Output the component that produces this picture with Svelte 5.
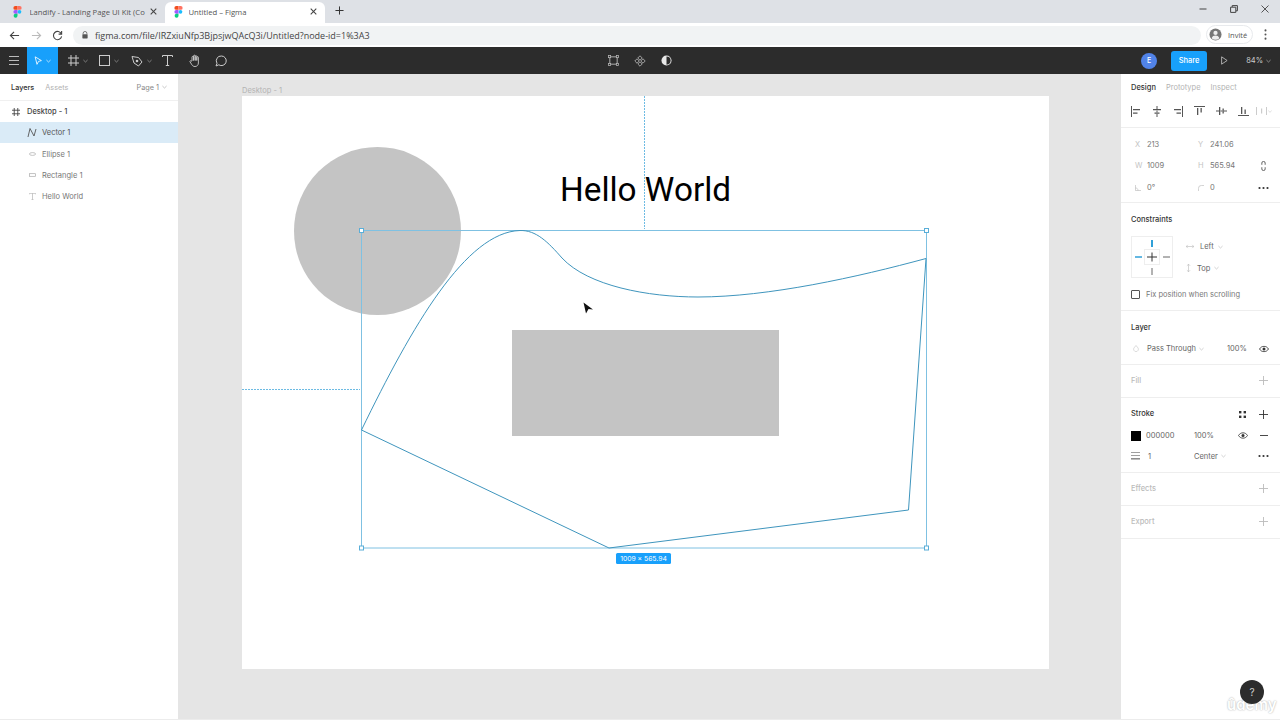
<script>
  const layers = [
    { name: 'Vector 1', icon: 'vector', selected: true },
    { name: 'Ellipse 1', icon: 'ellipse' },
    { name: 'Rectangle 1', icon: 'rect' },
    { name: 'Hello World', icon: 'text' }
  ];
</script>

{#snippet figmaLogo()}
  <svg class="favicon" viewBox="0 0 12 16" width="9" height="12">
    <path d="M3 0h3v5H3a2.5 2.5 0 0 1 0-5z" fill="#f24e1e"/>
    <path d="M6 0h3a2.5 2.5 0 0 1 0 5H6z" fill="#ff7262"/>
    <path d="M3 5.2h3v5H3a2.5 2.5 0 0 1 0-5z" fill="#a259ff"/>
    <circle cx="8.6" cy="7.7" r="2.5" fill="#1abcfe"/>
    <path d="M3 10.4h3V13a2.6 2.6 0 1 1-3-2.6z" fill="#0acf83"/>
  </svg>
{/snippet}

{#snippet chevron(color = '#999')}
  <svg class="chev" viewBox="0 0 6 4" width="5" height="4"><path d="M.5.8 3 3.2 5.5.8" fill="none" stroke={color} stroke-width=".8"/></svg>
{/snippet}

{#snippet plus(color = '#bbb')}
  <svg viewBox="0 0 10 10" width="9" height="9"><path d="M5 0v10M0 5h10" stroke={color} stroke-width="1" fill="none"/></svg>
{/snippet}

{#snippet dots()}
  <svg viewBox="0 0 11 3" width="11" height="3"><circle cx="1.5" cy="1.5" r="1.1" fill="#333"/><circle cx="5.5" cy="1.5" r="1.1" fill="#333"/><circle cx="9.5" cy="1.5" r="1.1" fill="#333"/></svg>
{/snippet}

{#snippet eye()}
  <svg viewBox="0 0 12 8" width="10" height="7"><path d="M.6 4C2 1.8 3.8.8 6 .8S10 1.8 11.4 4C10 6.2 8.2 7.2 6 7.2S2 6.2.6 4z" fill="none" stroke="#333" stroke-width="1"/><circle cx="6" cy="4" r="1.8" fill="#333"/></svg>
{/snippet}

<div class="app">
  <div class="tabs">
    <div class="tab inactive">
      {@render figmaLogo()}
      <span class="tab-title">Landify - Landing Page UI Kit (Co</span>
      <svg class="tab-x" viewBox="0 0 8 8" width="7" height="7"><path d="M.8.8l6.4 6.4M7.2.8.8 7.2" stroke="#444" stroke-width="1.2"/></svg>
    </div>
    <div class="tab active">
      {@render figmaLogo()}
      <span class="tab-title">Untitled – Figma</span>
      <svg class="tab-x" viewBox="0 0 8 8" width="7" height="7"><path d="M.8.8l6.4 6.4M7.2.8.8 7.2" stroke="#444" stroke-width="1.2"/></svg>
    </div>
    <svg class="newtab" viewBox="0 0 10 10" width="9" height="9"><path d="M5 .5v9M.5 5h9" stroke="#333" stroke-width="1.1"/></svg>
    <div class="winctl">
      <svg viewBox="0 0 8 8" width="8" height="8"><path d="M.5 4h7" stroke="#444"/></svg>
      <svg viewBox="0 0 8 8" width="8" height="8"><path d="M.6 2.2h5.2v5.2H.6zM2.2 2V.6h5.2v5.2H6" fill="none" stroke="#444"/></svg>
      <svg viewBox="0 0 8 8" width="8" height="8"><path d="M.5.5l7 7M7.5.5l-7 7" stroke="#444" stroke-width=".9"/></svg>
    </div>
  </div>

  <div class="address">
    <svg viewBox="0 0 12 12" width="11" height="11"><path d="M11 6H1.5M5.500 2 1.500 6l4 4" fill="none" stroke="#444" stroke-width="1.2"/></svg>
    <svg viewBox="0 0 12 12" width="11" height="11"><path d="M1 6h9.500M6.500 2l4 4-4 4" fill="none" stroke="#bbb" stroke-width="1.2"/></svg>
    <svg class="reload" viewBox="0 0 12 12" width="11" height="11"><path d="M10.200 4.200A4.500 4.500 0 1 0 10.500 7M10.500 1.200v3.300H7.200" fill="none" stroke="#444" stroke-width="1.2"/></svg>
    <div class="url">
      <svg viewBox="0 0 8 10" width="6" height="8"><path d="M1.500 4V2.800a2.500 2.500 0 0 1 5 0V4" fill="none" stroke="#555"/><rect x=".5" y="4" width="7" height="5.500" rx=".7" fill="#555"/></svg>
      <span>figma.com/file/IRZxiuNfp3BjpsjwQAcQ3i/Untitled?node-id=1%3A3</span>
    </div>
    <div class="guest">
      <svg viewBox="0 0 14 14" width="13" height="13"><circle cx="7" cy="7" r="6.500" fill="#777"/><circle cx="7" cy="5.300" r="2.300" fill="#eee"/><path d="M2.800 11c.8-2 2.300-2.800 4.200-2.800s3.400.8 4.200 2.800a6 6 0 0 1-8.400 0z" fill="#eee"/></svg>
      <span>Invité</span>
    </div>
    <svg class="kebab" viewBox="0 0 3 12" width="3" height="11"><circle cx="1.500" cy="1.500" r="1.100" fill="#555"/><circle cx="1.500" cy="6" r="1.100" fill="#555"/><circle cx="1.500" cy="10.500" r="1.100" fill="#555"/></svg>
  </div>

  <div class="toolbar">
    <div class="tools">
      <div class="tool menu">
        <svg viewBox="0 0 10 9" width="10" height="9"><path d="M0 .5h10M0 4.500h10M0 8.500h10" stroke="#bbb"/></svg>
      </div>
      <div class="tool move">
        <svg viewBox="0 0 10 12" width="9" height="10"><path d="M1 1l7.500 4.500-3.500 1-1.800 3.500z" fill="none" stroke="#fff"/></svg>
        <svg class="chev" viewBox="0 0 6 4" width="5" height="4"><path d="M.5.8 3 3.200 5.500.8" fill="none" stroke="#fff" stroke-width=".8"/></svg>
      </div>
      <div class="tool group">
        <svg viewBox="0 0 11 11" width="11" height="11"><path d="M3 0v11M8 0v11M0 3h11M0 8h11" stroke="#ccc" fill="none"/></svg>
        {@render chevron('#aaa')}
      </div>
      <div class="tool group">
        <svg viewBox="0 0 11 11" width="11" height="11"><rect x=".5" y=".5" width="10" height="10" fill="none" stroke="#ccc"/></svg>
        {@render chevron('#aaa')}
      </div>
      <div class="tool group">
        <svg viewBox="0 0 12 12" width="12" height="12"><path d="M1 1.500 7.500 2.500 11 7 7.500 11 3 8z" fill="none" stroke="#ccc"/><circle cx="6" cy="6" r="1.300" fill="#ccc"/></svg>
        {@render chevron('#aaa')}
      </div>
      <div class="tool group text-tool">
        <svg viewBox="0 0 11 11" width="11" height="11"><path d="M.5 2V.5h10V2M5.500.5v10M3.800 10.500h3.400" fill="none" stroke="#ccc"/></svg>
      </div>
      <div class="tool hand">
        <svg viewBox="0 0 12 13" width="12" height="13"><path d="M3 7V3.200a.8.8 0 0 1 1.600 0V6.500V2a.8.8 0 0 1 1.600 0v4.500V2.500a.8.8 0 0 1 1.600 0v4V3.500a.8.8 0 0 1 1.600 0V9c0 2-1.400 3.500-3.400 3.500-1.500 0-2.400-.6-3.100-1.700L1 7.800c-.4-.9.800-1.500 1.300-.7z" fill="none" stroke="#ccc" stroke-width=".9"/></svg>
      </div>
      <div class="tool comment">
        <svg viewBox="0 0 12 12" width="12" height="12"><path d="M6.500 1a4.800 4.800 0 1 1-2.700 8.800L1 11l1-2.700A4.800 4.800 0 0 1 6.500 1z" fill="none" stroke="#ccc"/></svg>
      </div>
    </div>
    <div class="center-tools">
      <svg viewBox="0 0 12 12" width="11" height="11"><path d="M2 2h8v8H2z" fill="none" stroke="#bbb"/><g fill="#2c2c2c" stroke="#bbb" stroke-width=".8"><rect x=".5" y=".5" width="2.400" height="2.400"/><rect x="9.100" y=".5" width="2.400" height="2.400"/><rect x=".5" y="9.100" width="2.400" height="2.400"/><rect x="9.100" y="9.100" width="2.400" height="2.400"/></g></svg>
      <svg viewBox="0 0 12 12" width="12" height="12"><g fill="none" stroke="#bbb" stroke-width=".8"><path d="M6 .8 8.200 3 6 5.200 3.800 3zM6 6.800 8.200 9 6 11.200 3.800 9zM3 3.800 5.200 6 3 8.200.8 6zM9 3.800 11.200 6 9 8.200 6.800 6z"/></g></svg>
      <svg viewBox="0 0 12 12" width="11" height="11"><circle cx="6" cy="6" r="5.500" fill="#e8e8e8"/><path d="M6 1.500a4.500 4.500 0 0 1 0 9z" fill="#2c2c2c"/></svg>
    </div>
    <div class="right-tools">
      <div class="avatar">E</div>
      <div class="share">Share</div>
      <svg class="play" viewBox="0 0 8 10" width="7" height="9"><path d="M.7.8 7 5 .7 9.200z" fill="none" stroke="#ccc" stroke-width=".9"/></svg>
      <span class="zoom-level">84%</span>
      {@render chevron('#bbb')}
    </div>
  </div>

  <div class="workspace">
    <aside class="left">
      <div class="left-tabs">
        <span class="dark">Layers</span>
        <span class="muted">Assets</span>
        <span class="page">Page 1 {@render chevron('#aaa')}</span>
      </div>
      <div class="layer-root">
        <svg viewBox="0 0 9 9" width="8" height="8"><path d="M2.500 0v9M6.500 0v9M0 2.500h9M0 6.500h9" stroke="#444" fill="none"/></svg>
        <span>Desktop - 1</span>
      </div>
      {#each layers as layer}
        <div class="layer" class:selected={layer.selected}>
          <span class="layer-icon">
            {#if layer.icon === 'vector'}
              <svg viewBox="0 0 10 11" width="10" height="11"><path d="M1 10 3 1.500 7 9 9 2" fill="none" stroke="#555" stroke-width=".9"/></svg>
            {:else if layer.icon === 'ellipse'}
              <svg viewBox="0 0 8 4" width="7" height="4"><ellipse cx="4" cy="2" rx="3.500" ry="1.600" fill="none" stroke="#aaa" stroke-width=".8"/></svg>
            {:else if layer.icon === 'rect'}
              <svg viewBox="0 0 8 4" width="7" height="4"><rect x=".5" y=".5" width="7" height="3" fill="none" stroke="#aaa" stroke-width=".8"/></svg>
            {:else}
              <svg viewBox="0 0 8 8" width="7" height="7"><path d="M.4 1.500V.4h7.200v1.100M4 .4v7.200M2.800 7.600h2.400" fill="none" stroke="#aaa" stroke-width=".7"/></svg>
            {/if}
          </span>
          <span class="layer-name">{layer.name}</span>
        </div>
      {/each}
    </aside>

    <main class="canvas">
      <div class="frame-label">Desktop - 1</div>
      <div class="artboard"></div>
      <div class="ellipse"></div>
      <div class="rectangle"></div>
      <div class="hello">Hello World</div>
      <svg class="overlay" viewBox="0 0 942 646" width="942" height="646">
        <path d="M466.500 22V155" class="guide"/>
        <path d="M64 315.500H182" class="guide"/>
        <rect x="183.500" y="156.500" width="565" height="317.500" fill="none" stroke="#7fc1e2" stroke-width="1"/>
        <path d="M183.500 356C234 252 288 158 342 156.500C358 156 370 168 384 184C410 212 470 223 520 223C590 223 680 203 748 184.500L730.500 436L431 474Z" fill="none" stroke="#3f95bd" stroke-width="1"/>
        <g fill="#fff" stroke="#5aaed8" stroke-width="1">
          <rect x="181.500" y="154.500" width="4" height="4"/>
          <rect x="746.500" y="154.500" width="4" height="4"/>
          <rect x="181.500" y="472" width="4" height="4"/>
          <rect x="746.500" y="472" width="4" height="4"/>
        </g>
        <path d="M405.500 228.500 415 235.500 410.500 235 408 239.500z" fill="#111"/>
      </svg>
      <div class="size-badge">1009 × 565.94</div>
    </main>

    <aside class="right">
      <section class="s-tabs">
        <div class="tabs-row">
          <span class="dark">Design</span>
          <span class="muted">Prototype</span>
          <span class="muted">Inspect</span>
        </div>
        <div class="align-row">
          <svg viewBox="0 0 10 11" width="10" height="11"><path d="M.5 0v11" stroke="#555"/><path d="M2 3h7v1.300H2zM2 6.500h4.500v1.300H2z" fill="#555"/></svg>
          <svg viewBox="0 0 10 11" width="10" height="11"><path d="M5 0v3M5 4.500v2M5 8v3" stroke="#555"/><path d="M1 3h8v1.300H1zM2.500 6.500h5v1.300h-5z" fill="#555"/></svg>
          <svg viewBox="0 0 10 11" width="10" height="11"><path d="M9.500 0v11" stroke="#555"/><path d="M1 3h7v1.300H1zM3.500 6.500H8v1.300H3.500z" fill="#555"/></svg>
          <svg viewBox="0 0 11 10" width="11" height="10"><path d="M0 .5h11" stroke="#555"/><path d="M3 2h1.300v7H3zM6.500 2h1.300v4.500H6.500z" fill="#555"/></svg>
          <svg viewBox="0 0 11 10" width="11" height="10"><path d="M0 5h3M4.500 5h2M8 5h3" stroke="#555"/><path d="M3 1h1.300v8H3zM6.500 2.500h1.300v5H6.500z" fill="#555"/></svg>
          <svg viewBox="0 0 11 10" width="11" height="10"><path d="M0 9.500h11" stroke="#555"/><path d="M3 1h1.300v7H3zM6.500 3.500h1.300V8H6.500z" fill="#555"/></svg>
          <span class="dist">
            <svg viewBox="0 0 11 10" width="11" height="10"><path d="M.5 1v8M10.500 1v8" stroke="#ccc"/><path d="M5 2.500h1.200v5H5z" fill="#ccc"/></svg>
            <svg viewBox="0 0 6 4" width="4" height="3"><path d="M.5.800 3 3.200 5.500.800" fill="none" stroke="#ccc"/></svg>
          </span>
        </div>
      </section>

      <section class="s-geom">
        <div class="geom-row"><span class="lbl">X</span><span class="val w1">213</span><span class="lbl">Y</span><span class="val">241.06</span></div>
        <div class="geom-row">
          <span class="lbl">W</span><span class="val w1">1009</span><span class="lbl">H</span><span class="val">565.94</span>
          <svg class="end lock" viewBox="0 0 6 11" width="5" height="10"><path d="M1 4V2a2 2 0 0 1 4 0v2M1 7v2a2 2 0 0 0 4 0V7" fill="none" stroke="#444"/></svg>
        </div>
        <div class="geom-row">
          <span class="lbl"><svg viewBox="0 0 7 7" width="6" height="6"><path d="M.5 0v6.500H7M.5 3.500C2.500 3.500 3.500 4.500 3.500 6.500" fill="none" stroke="#bbb" stroke-width=".8"/></svg></span>
          <span class="val w1">0°</span>
          <span class="lbl"><svg viewBox="0 0 7 7" width="6" height="6"><path d="M.5 7V4A3.500 3.500 0 0 1 4 .5h3" fill="none" stroke="#bbb" stroke-width=".8"/></svg></span>
          <span class="val">0</span>
          <span class="end">{@render dots()}</span>
        </div>
      </section>

      <section class="s-constraints">
        <div class="title">Constraints</div>
        <div class="con-body">
          <div class="con-box">
            <svg viewBox="0 0 42 42" width="42" height="42">
              <rect x="13.500" y="13.500" width="15" height="15" fill="none" stroke="#eee"/>
              <path d="M21 16.500v9M16 21h10" stroke="#333" fill="none"/>
              <path d="M21 4v7" stroke="#30a0d8" stroke-width="2"/>
              <path d="M4 21h7" stroke="#30a0d8" stroke-width="1.500"/>
              <path d="M32 21h7M21 32v7" stroke="#666" fill="none"/>
            </svg>
          </div>
          <div class="con-opts">
            <div class="con-opt">
              <svg viewBox="0 0 9 5" width="8" height="5"><path d="M0 2.500h9M2 .7.200 2.500 2 4.300M7 .7l1.800 1.800L7 4.300" fill="none" stroke="#bbb" stroke-width=".7"/></svg>
              <span>Left</span>{@render chevron('#bbb')}
            </div>
            <div class="con-opt">
              <svg viewBox="0 0 5 9" width="5" height="8"><path d="M2.500 0v9M.7 2 2.500.2 4.300 2M.7 7l1.800 1.800L4.300 7" fill="none" stroke="#bbb" stroke-width=".7"/></svg>
              <span>Top</span>{@render chevron('#bbb')}
            </div>
          </div>
        </div>
        <label class="fix"><span class="check"></span><span>Fix position when scrolling</span></label>
      </section>

      <section class="s-layer">
        <div class="title">Layer</div>
        <div class="row first">
          <svg class="drop" viewBox="0 0 7 8" width="6" height="7"><path d="M3.500.5 6 3.500a2.800 2.800 0 1 1-5 0z" fill="none" stroke="#ccc" stroke-width=".8"/></svg>
          <span class="txt">Pass Through</span>{@render chevron('#bbb')}
          <span class="pct">100%</span>
          <span class="end">{@render eye()}</span>
        </div>
      </section>

      <section class="s-head"><span class="faint">Fill</span>{@render plus()}</section>

      <section class="s-stroke">
        <div class="title between">
          <span>Stroke</span>
          <span class="stroke-icons">
            <svg viewBox="0 0 7 7" width="7" height="7"><g fill="#333"><rect width="2.400" height="2.400"/><rect x="4.600" width="2.400" height="2.400"/><rect y="4.600" width="2.400" height="2.400"/><rect x="4.600" y="4.600" width="2.400" height="2.400"/></g></svg>
            {@render plus('#333')}
          </span>
        </div>
        <div class="row first">
          <span class="swatch"></span>
          <span class="txt hex">000000</span>
          <span class="txt">100%</span>
          <span class="stroke-end">{@render eye()}<svg viewBox="0 0 9 1" width="8" height="1"><path d="M0 .5h9" stroke="#333"/></svg></span>
        </div>
        <div class="row second">
          <svg class="weight" viewBox="0 0 9 8" width="9" height="8"><path d="M0 .5h9M0 3.500h9" stroke="#888" stroke-width=".8"/><path d="M0 6.800h9" stroke="#888" stroke-width="1.500"/></svg>
          <span class="txt one">1</span>
          <span class="txt">Center</span>{@render chevron('#bbb')}
          <span class="end">{@render dots()}</span>
        </div>
      </section>

      <section class="s-head"><span class="faint">Effects</span>{@render plus()}</section>
      <section class="s-head"><span class="faint">Export</span>{@render plus()}</section>
      <div class="watermark">ûdemy</div>
      <div class="help">?</div>
    </aside>
  </div>
</div>

<style>
  :global(body) { margin: 0; background: #fff; overflow: hidden; }
  .app {
    width: 1280px; height: 720px; display: flex; flex-direction: column; overflow: hidden;
    font-family: Inter, "Liberation Sans", sans-serif; font-size: 7.5px; color: #444;
    border-bottom: 1px solid #ececec; box-sizing: border-box;
  }
  svg { display: block; flex: none; }

  .tabs { height: 23px; background: #dee1e6; display: flex; align-items: flex-end; padding-left: 8px; flex: none; font-family: "Open Sans", "Liberation Sans", sans-serif; }
  .tab { height: 21px; display: flex; align-items: center; padding-bottom: 2px; box-sizing: border-box; font-size: 7.7px; color: #555; }
  .tab.inactive { width: 157px; padding-left: 5px; }
  .tab.inactive .tab-title { margin-left: 7.5px; margin-right: 2px; }
  .tab.active { width: 160px; background: #fff; border-radius: 6px 6px 0 0; padding-left: 9px; }
  .tab.active .tab-title { margin-left: 5.5px; }
  .tab-title { flex: 1; white-space: nowrap; overflow: hidden; }
  .tab-x { margin-right: 8px; }
  .newtab { margin: 0 0 8px 10px; }
  .winctl { margin-left: auto; display: flex; gap: 23px; padding: 0 11px 10px 0; }

  .address { height: 24px; background: #fff; display: flex; align-items: center; flex: none; padding-left: 9px; gap: 11px; box-sizing: border-box; font-family: "Open Sans", "Liberation Sans", sans-serif; }
  .reload { margin-left: -1px; }
  .url { flex: none; width: 1128px; height: 19px; margin-left: -1px; background: #f1f3f4; border-radius: 10px; display: flex; align-items: center; padding-left: 9px; gap: 7px; box-sizing: border-box; font-size: 9px; color: #444; position: relative; }
  .guest { position: absolute; left: 1206px; top: 25px; height: 19px; width: 47px; background: #fff; border: 1px solid #e8eaed; border-radius: 10px; display: flex; align-items: center; gap: 6px; padding-left: 2px; box-sizing: border-box; font-size: 7.5px; color: #555; }
  .kebab { position: absolute; left: 1264px; top: 29px; }

  .toolbar { height: 27px; background: #2c2c2c; flex: none; display: grid; grid-template-columns: 1fr auto 1fr; align-items: center; color: #ddd; }
  .tools { display: flex; height: 100%; }
  .tool { height: 100%; display: flex; align-items: center; justify-content: center; gap: 3px; box-sizing: border-box; }
  .tool.menu { width: 27px; }
  .tool.move { width: 31px; background: #18a0fb; }
  .tool.group { width: 31.5px; justify-content: flex-start; padding-left: 9.5px; gap: 4px; }
  .tool.text-tool { width: 30px; }
  .tool.hand { width: 24px; }
  .tool.comment { width: 28px; }
  .center-tools { display: flex; gap: 15px; align-items: center; }
  .right-tools { display: flex; align-items: center; justify-content: flex-end; padding-right: 9px; }
  .avatar { width: 16px; height: 16px; border-radius: 50%; background: #5183e8; color: #fff; font-size: 7px; font-weight: 500; display: flex; align-items: center; justify-content: center; margin-right: 14px; }
  .share { width: 36px; height: 20px; background: #18a0fb; border-radius: 3px; color: #fff; font-size: 7.5px; font-weight: 500; display: flex; align-items: center; justify-content: center; margin-right: 14px; }
  .play { margin-right: 18px; }
  .zoom-level { font-size: 7.5px; color: #ccc; margin-right: 3px; }

  .workspace { flex: 1; display: flex; min-height: 0; }
  .left { background: #fff; flex: none; border-right: 1px solid #e5e5e5; box-sizing: border-box; width: 179px; }
  .left-tabs { height: 26px; display: flex; align-items: center; padding: 0 11px; gap: 11px; border-bottom: 1px solid #f0f0f0; font-size: 7.3px; }
  .dark { color: #333; font-weight: 500; }
  .muted { color: #b3b3b3; }
  .page { margin-left: auto; color: #888; display: flex; align-items: center; gap: 3px; }
  .layer-root { height: 21px; display: flex; align-items: center; padding-left: 12px; gap: 7px; color: #444; font-weight: 500; }
  .layer { height: 21.4px; display: flex; align-items: center; color: #777; }
  .layer.selected { background: #daebf7; color: #555; }
  .layer-icon { width: 42px; display: flex; justify-content: flex-end; padding-right: 6px; box-sizing: border-box; }
  .layer.selected .layer-icon { padding-right: 5px; }

  .canvas { flex: 1; position: relative; background: #e5e5e5; min-width: 0; overflow: hidden; }
  .frame-label { position: absolute; left: 63px; top: 12px; color: #b3b3b3; font-size: 7.5px; }
  .artboard { position: absolute; left: 63px; top: 22px; width: 807px; height: 573px; background: #fff; }
  .ellipse { position: absolute; left: 115px; top: 73px; width: 167px; height: 168px; border-radius: 50%; background: #c4c4c4; }
  .rectangle { position: absolute; left: 333px; top: 256px; width: 267px; height: 106px; background: #c4c4c4; }
  .hello { position: absolute; left: 381px; top: 94px; font-size: 33.3px; line-height: 44px; color: #000; font-family: Roboto, "Liberation Sans", sans-serif; white-space: nowrap; }
  .overlay { position: absolute; left: -1px; top: 0; pointer-events: none; }
  .guide { stroke: #6dbbe3; stroke-width: 1; stroke-dasharray: 2 1; fill: none; }
  .size-badge { position: absolute; left: 437px; top: 479px; width: 55px; height: 11px; background: #18a0fb; color: #fff; border-radius: 1.5px; font-size: 6.8px; display: flex; align-items: center; justify-content: center; white-space: nowrap; }

  .right { width: 160px; flex: none; background: #fff; border-left: 1px solid #e5e5e5; box-sizing: border-box; padding-left: 10px; position: relative; font-size: 7.5px; }
  .right section { margin-left: -10px; padding-left: 10px; border-bottom: 1px solid #eee; box-sizing: border-box; }
  .s-tabs { height: 54px; }
  .tabs-row { height: 26px; display: flex; align-items: center; gap: 10px; }
  .align-row { display: flex; align-items: center; gap: 11px; height: 22px; }
  .dist { display: flex; align-items: center; gap: 1px; margin-left: -4px; }
  .s-geom { height: 75px; padding-top: 6px; }
  .geom-row { height: 21.5px; display: flex; align-items: center; position: relative; }
  .geom-row:nth-child(2) { margin-top: -.5px; margin-bottom: .5px; }
  .lbl { width: 16px; color: #c4c4c4; flex: none; padding-left: 4px; box-sizing: border-box; }
  .val { color: #777; }
  .w1 { width: 47px; flex: none; }
  .end { position: absolute; right: 11px; top: 50%; transform: translateY(-50%); }
  .lock { right: 14px; }
  .s-constraints { height: 108px; padding-top: 11px; }
  .title { color: #333; font-weight: 500; height: 12px; line-height: 12px; }
  .between { display: flex; justify-content: space-between; align-items: center; padding-right: 12px; }
  .stroke-icons { display: flex; align-items: center; gap: 13px; }
  .con-body { display: flex; margin-top: 10px; gap: 13px; }
  .con-box { width: 42px; height: 42px; border: 1px solid #eee; box-sizing: border-box; }
  .con-box svg { margin: -1px; }
  .con-opts { display: flex; flex-direction: column; }
  .con-opt { height: 21.5px; display: flex; align-items: center; gap: 6px; color: #666; }
  .con-opt :global(.chev) { margin-left: -2px; }
  .fix { display: flex; align-items: center; gap: 6px; margin-top: 11px; color: #777; }
  .check { width: 7px; height: 7px; border: 1px solid #555; border-radius: 1px; }
  .s-layer { height: 54px; padding-top: 11px; }
  .row { height: 21.5px; display: flex; align-items: center; position: relative; color: #666; }
  .row.first { margin-top: 4px; }
  .s-stroke .row.first { margin-top: 5px; }
  .row.second { margin-top: -1px; }
  .drop { margin-left: 2px; margin-right: 8px; }
  .txt { margin-right: 3px; }
  .pct { position: absolute; left: 96px; }
  .s-head { height: 33px; display: flex; align-items: center; justify-content: space-between; padding-right: 12px; padding-bottom: 1px; }
  .faint { color: #bbb; font-weight: 500; }
  .s-stroke { height: 75px; padding-top: 10px; }
  .swatch { width: 10px; height: 10px; background: #000; margin-right: 5px; }
  .hex { width: 45px; }
  .stroke-end { position: absolute; right: 12px; display: flex; align-items: center; gap: 12px; }
  .weight { margin-right: 8px; }
  .one { width: 43px; }
  .help { position: absolute; left: 119px; top: 606px; width: 24px; height: 24px; border-radius: 50%; background: #2c2c2c; color: #ccc; font-size: 10px; display: flex; align-items: center; justify-content: center; }
  .watermark { position: absolute; left: 106px; top: 622px; font-size: 15px; line-height: 18px; font-weight: 600; color: #fff; text-shadow: 0 0 2px #bbb, 0 0 1px #ccc; white-space: nowrap; }
</style>
